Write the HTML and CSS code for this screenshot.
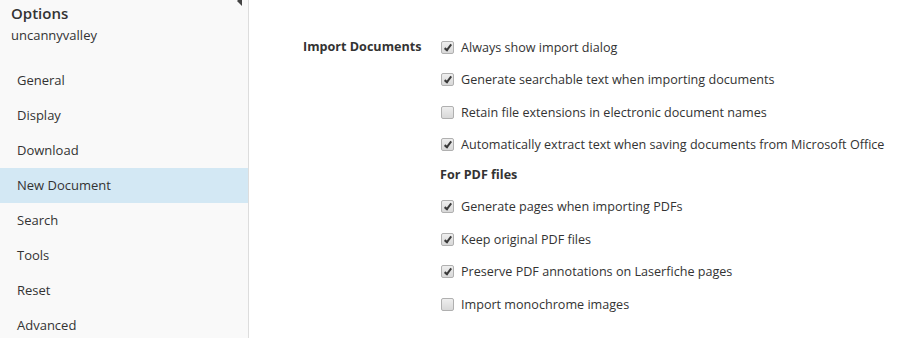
FILE: index.html
```html
<!DOCTYPE html>
<html lang="en">

<head>
    <meta charset="UTF-8">
    <meta name="viewport" content="width=device-width, initial-scale=1.0">
    <title>Options</title>
    <link rel="stylesheet" href="styles.css">
</head>

<body>
    <div class="page">
        <aside class="sidebar">
            <span class="collapse"></span>
            <div class="title">Options</div>
            <div class="user">uncannyvalley</div>
            <ul class="nav">
                <li>General</li>
                <li>Display</li>
                <li>Download</li>
                <li class="active">New Document</li>
                <li>Search</li>
                <li>Tools</li>
                <li>Reset</li>
                <li>Advanced</li>
            </ul>
        </aside>

        <main class="content">
            <div class="section">
                <div class="section-label">Import Documents</div>
                <div class="options">
                    <label class="option"><span class="box checked"></span>Always show import dialog</label>
                    <label class="option"><span class="box checked"></span>Generate searchable text when importing documents</label>
                    <label class="option"><span class="box"></span>Retain file extensions in electronic document names</label>
                    <label class="option"><span class="box checked"></span>Automatically extract text when saving documents from Microsoft Office</label>
                    <div class="subhead">For PDF files</div>
                    <label class="option"><span class="box checked"></span>Generate pages when importing PDFs</label>
                    <label class="option"><span class="box checked"></span>Keep original PDF files</label>
                    <label class="option"><span class="box checked"></span>Preserve PDF annotations on Laserfiche pages</label>
                    <label class="option"><span class="box"></span>Import monochrome images</label>
                </div>
            </div>
        </main>
    </div>
</body>

</html>
```

FILE: styles.css
```css
body {
    margin: 0;
    font-family: "Open Sans", sans-serif;
    font-size: 13px;
    color: #333;
    background-color: #fff;
}

.page {
    display: flex;
    height: 338px;
    overflow: hidden;
}

.sidebar {
    position: relative;
    width: 248px;
    flex-shrink: 0;
    background-color: #f9f9f9;
    border-right: 1px solid #ddd;
}

.collapse {
    position: absolute;
    top: -4px;
    right: 6px;
    width: 0;
    height: 0;
    border-top: 5px solid transparent;
    border-bottom: 5px solid transparent;
    border-right: 5px solid #444;
}

.title {
    padding: 3px 0 0 11px;
    font-size: 15px;
    font-weight: 600;
    line-height: 20px;
}

.user {
    padding: 2px 0 0 11px;
    line-height: 20px;
}

.nav {
    list-style: none;
    margin: 18px 0 0;
    padding: 0;
}

.nav li {
    height: 35px;
    line-height: 35px;
    padding-left: 17px;
}

.nav li.active {
    background-color: #d3e8f4;
}

.content {
    flex: 1;
    padding: 38px 0 0 54px;
    font-size: 12.6px;
}

.section {
    display: flex;
}

.section-label {
    width: 137px;
    font-weight: 700;
    line-height: 18px;
}

.options {
    display: flex;
    flex-direction: column;
}

.option {
    display: flex;
    align-items: center;
    height: 18px;
    margin-bottom: 14.5px;
}

.subhead {
    font-weight: 700;
    height: 18px;
    line-height: 18px;
    margin: -2.5px 0 14px;
}

.box {
    width: 11px;
    height: 11px;
    margin: 0 7px 0 1px;
    border: 1px solid #b0b0b0;
    border-radius: 2px;
    background: linear-gradient(#eee, #d8d8d8);
    box-sizing: content-box;
    position: relative;
}

.box.checked::after {
    content: "";
    position: absolute;
    left: 4px;
    top: 1px;
    width: 2px;
    height: 6px;
    border: solid #3a3a3a;
    border-width: 0 2px 2px 0;
    transform: rotate(38deg);
}
```
